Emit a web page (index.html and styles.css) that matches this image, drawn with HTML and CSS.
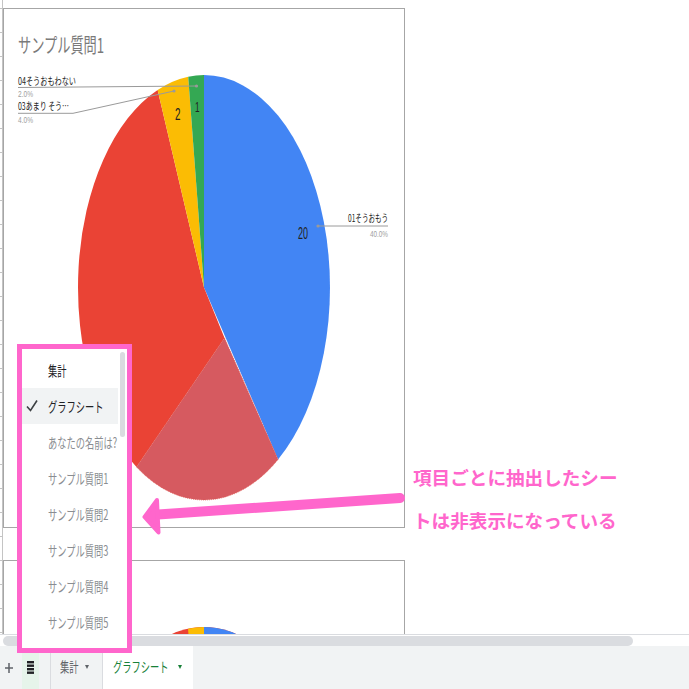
FILE: index.html
```html
<!DOCTYPE html>
<html lang="ja">
<head>
<meta charset="utf-8">
<title>グラフシート</title>
<link rel="stylesheet" href="styles.css">
</head>
<body>
<div class="app">
  <div class="sheet">
    <div class="gutter"></div>
    <div class="canvas">
      <div class="chart chart1">
        <div class="chart-title"><span class="cond">サンプル質問1</span></div>
        <svg class="plot" viewBox="4 9 400 518" width="400" height="518">
          <path d="M204 287.5 L204 75 A126 212.5 0 0 1 278.06 459.4 Z" fill="#4285f4"/>
          <path d="M204 287.5 L224.5 338 L136.5 466.9 A126 212.5 0 0 1 157.62 89.9 Z" fill="#ea4335"/>
          <path d="M224.5 338 L278.06 459.4 A126 212.5 0 0 1 136.5 466.9 Z" fill="#d65a60" stroke="#e0534d" stroke-width="0.8" stroke-dasharray="1 1"/>
          <path d="M204 287.5 L157.62 89.9 A126 212.5 0 0 1 188.21 76.68 Z" fill="#fbbc04"/>
          <path d="M204 287.5 L188.21 76.68 A126 212.5 0 0 1 204 75 Z" fill="#34a853"/>
          <g class="leader">
            <line x1="318" y1="226" x2="388" y2="226"/>
            <polyline points="18,87.5 196.5,86"/>
            <polyline points="18,113.3 73,113.3 174,91"/>
          </g>
          <g class="dot">
            <circle cx="318" cy="226" r="1.6"/>
            <circle cx="196.5" cy="86" r="1.6"/>
            <circle cx="174" cy="91" r="1.6"/>
          </g>
          <text class="val big" x="298" y="239" textLength="10" lengthAdjust="spacingAndGlyphs">20</text>
          <text class="val mid" x="175" y="120" textLength="5.5" lengthAdjust="spacingAndGlyphs">2</text>
          <text class="val small" x="195" y="112" textLength="4.5" lengthAdjust="spacingAndGlyphs">1</text>
          <text class="lbl" x="388" y="222" text-anchor="end" textLength="40" lengthAdjust="spacingAndGlyphs">01そうおもう</text>
          <text class="pct" x="388" y="237" text-anchor="end" textLength="18" lengthAdjust="spacingAndGlyphs">40.0%</text>
          <text class="lbl" x="18" y="85" textLength="58" lengthAdjust="spacingAndGlyphs">04そうおもわない</text>
          <text class="pct" x="18" y="97" textLength="15" lengthAdjust="spacingAndGlyphs">2.0%</text>
          <text class="lbl" x="18" y="110" textLength="51" lengthAdjust="spacingAndGlyphs">03あまり そう…</text>
          <text class="pct" x="18" y="123" textLength="15" lengthAdjust="spacingAndGlyphs">4.0%</text>
        </svg>
      </div>
      <div class="chart chart2">
        <svg class="plot" viewBox="4 561 400 198" width="400" height="198">
          <ellipse cx="204" cy="839.5" rx="126" ry="212.5" fill="#ea4335"/>
          <path d="M204 839.5 L204 627 A126 212.5 0 0 1 204 1052 Z" fill="#4285f4"/>
          <path d="M204 839.5 L188.04 628.72 A126 212.5 0 0 1 204 627 Z" fill="#fbbc04"/>
        </svg>
      </div>
    </div>
  </div>
  <div class="hscroll"><div class="thumb"></div></div>
  <div class="tabbar">
    <div class="tb-add">
      <svg width="8" height="10" viewBox="0 0 8 10"><path d="M4 0V10M0 5H8" stroke="#5f6368" stroke-width="1.5"/></svg>
    </div>
    <div class="tb-list">
      <svg width="7" height="13" viewBox="0 0 7 13"><rect x="0" y="0" width="7" height="2.4" fill="#202124"/><rect x="0" y="3.5" width="7" height="2.4" fill="#202124"/><rect x="0" y="7" width="7" height="2.4" fill="#202124"/><rect x="0" y="10.5" width="7" height="2.4" fill="#202124"/></svg>
    </div>
    <div class="tab tab-sum"><span class="cond">集計</span><span class="caret"></span></div>
    <div class="tab tab-active"><span class="cond">グラフシート</span><span class="caret"></span></div>
  </div>

  <div class="menu">
    <ul class="menu-list">
      <li class="menu-item dark"><span class="cond">集計</span></li>
      <li class="menu-item dark sel">
        <svg class="check" width="12" height="14" viewBox="0 0 12 14"><path d="M1 7.5 L4.5 11.5 L11 1.5" fill="none" stroke="#3c4043" stroke-width="1.6"/></svg>
        <span class="cond">グラフシート</span>
      </li>
      <li class="menu-item muted"><span class="cond">あなたの名前は?</span></li>
      <li class="menu-item muted"><span class="cond">サンプル質問1</span></li>
      <li class="menu-item muted"><span class="cond">サンプル質問2</span></li>
      <li class="menu-item muted"><span class="cond">サンプル質問3</span></li>
      <li class="menu-item muted"><span class="cond">サンプル質問4</span></li>
      <li class="menu-item muted"><span class="cond">サンプル質問5</span></li>
    </ul>
    <div class="menu-scroll"><div class="menu-thumb"></div></div>
  </div>

  <svg class="arrow" width="689" height="689" viewBox="0 0 689 689">
    <line x1="400" y1="498" x2="158" y2="514.5" stroke="#ff66cc" stroke-width="10" stroke-linecap="round"/>
    <polygon points="157,500 144.5,517 158.5,532.5" fill="#ff66cc" stroke="#ff66cc" stroke-width="4" stroke-linejoin="round"/>
  </svg>
  <p class="note">項目ごとに抽出したシー<br>トは非表示になっている</p>
</div>
</body>
</html>
```
FILE: styles.css
```css
* { box-sizing: border-box; }
html, body { margin: 0; padding: 0; }
body {
  width: 689px;
  height: 689px;
  overflow: hidden;
  background: #fff;
  font-family: "Noto Sans CJK JP", "Noto Sans", sans-serif;
  color: #202124;
}
.app {
  position: relative;
  width: 689px;
  height: 689px;
  overflow: hidden;
  display: flex;
  flex-direction: column;
}
.cond {
  display: inline-block;
  white-space: nowrap;
  transform: scaleX(0.66);
  transform-origin: 0 50%;
}

/* sheet area */
.sheet {
  flex: none;
  height: 634px;
  display: flex;
  overflow: hidden;
  background: #fff;
}
.gutter {
  flex: none;
  width: 3px;
  height: 100%;
  border-right: 1px solid #c4c4c4;
  background-image: linear-gradient(to bottom, #c4c4c4 0, #c4c4c4 1px, transparent 1px);
  background-size: 100% 24px;
  background-position: 0 8px;
  background-repeat: repeat-y;
}
.canvas {
  flex: none;
  width: 402px;
  padding-top: 8px;
  display: flex;
  flex-direction: column;
  gap: 32px;
}
.chart {
  flex: none;
  position: relative;
  border: 1px solid #a6a6a6;
  background: #fff;
}
.chart1 { height: 520px; }
.chart2 { height: 200px; }
.chart-title {
  position: relative;
  z-index: 1;
  padding: 24px 0 0 14px;
  font-size: 20px;
  line-height: 24px;
  color: #7a7a7a;
}
.plot {
  position: absolute;
  left: 0;
  top: 0;
}
.leader line, .leader polyline {
  fill: none;
  stroke: #9a9a9a;
  stroke-width: 1;
}
.dot circle { fill: #9a9a9a; }
.lbl {
  font-family: "Noto Sans CJK JP", sans-serif;
  font-size: 10px;
  fill: #222;
}
.pct {
  font-family: "Liberation Sans", "Noto Sans CJK JP", sans-serif;
  font-size: 9px;
  fill: #9e9e9e;
}
.val {
  font-family: "Liberation Sans", sans-serif;
  fill: #222;
}
.val.big { font-size: 17px; }
.val.mid { font-size: 16px; }
.val.small { font-size: 14px; }

/* horizontal scrollbar */
.hscroll {
  flex: none;
  height: 12px;
  border-top: 1px solid #dadce0;
  padding: 1px 0 0 3px;
  background: #fff;
}
.thumb {
  width: 630px;
  height: 10px;
  border-radius: 5px;
  background: #dadce0;
}

/* tab bar */
.tabbar {
  flex: none;
  height: 43px;
  background: #f1f3f4;
  display: flex;
  align-items: stretch;
}
.tb-add {
  width: 18px;
  display: flex;
  align-items: center;
  justify-content: center;
  padding-top: 1px;
}
.tb-list {
  width: 17px;
  margin: 2px 11px 0 4px;
  background: #e6f4ea;
  display: flex;
  align-items: center;
  justify-content: center;
  padding-bottom: 3px;
}
.tab {
  display: flex;
  align-items: center;
  border-left: 1px solid #dadce0;
  padding-left: 9px;
  padding-bottom: 3px;
  font-size: 14px;
  line-height: 20px;
}
.tab-sum {
  width: 52px;
  color: #5f6368;
}
.tab-sum .cond { margin-right: -9.5px; }
.tab-sum .caret { margin-left: 6.5px; border-top-color: #5f6368; }
.tab-active {
  width: 91px;
  background: #fff;
  color: #188038;
  padding-left: 10px;
}
.tab-active .cond { margin-right: -28.6px; }
.tab-active .caret { margin-left: 9.5px; border-top-color: #188038; }
.caret {
  width: 0;
  height: 0;
  border-left: 2.5px solid transparent;
  border-right: 2.5px solid transparent;
  border-top: 4px solid #5f6368;
  margin-top: 2px;
}

/* sheet list menu */
.menu {
  position: absolute;
  left: 17px;
  top: 344px;
  width: 115px;
  height: 309px;
  border: 5px solid #ff66cc;
  background: #fff;
  display: flex;
  z-index: 5;
}
.menu-list {
  list-style: none;
  margin: 0;
  padding: 3px 0 0 0;
  width: 96px;
  flex: none;
}
.menu-item {
  position: relative;
  height: 36px;
  display: flex;
  align-items: center;
  padding-left: 26px;
  font-size: 14px;
  line-height: 20px;
}
.menu-item.dark { color: #202124; }
.menu-item.muted { color: #8a8d91; }
.menu-item.sel { background: #f1f3f4; }
.check {
  position: absolute;
  left: 4px;
  top: 11px;
}
.menu-scroll {
  flex: none;
  padding: 3px 2px 0 2px;
}
.menu-thumb {
  width: 5px;
  height: 85px;
  border-radius: 3px;
  background: #dadce0;
}

/* annotation */
.arrow {
  position: absolute;
  left: 0;
  top: 0;
  z-index: 6;
  pointer-events: none;
}
.note {
  position: absolute;
  left: 413px;
  top: 454.5px;
  margin: 0;
  z-index: 6;
  font-size: 18.6px;
  line-height: 43px;
  font-weight: 700;
  color: #ff66cc;
  white-space: nowrap;
}
```
